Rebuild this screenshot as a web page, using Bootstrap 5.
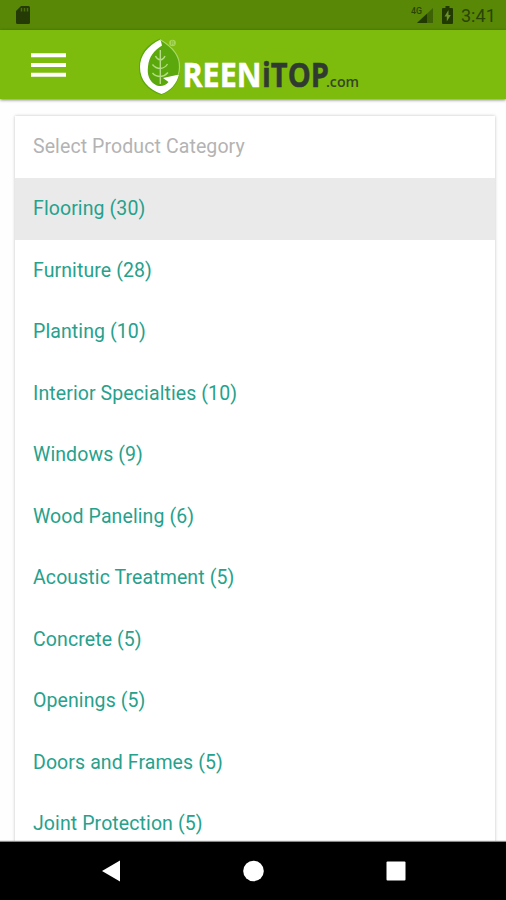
<!DOCTYPE html>
<html lang="en">
<head>
<meta charset="utf-8">
<meta name="viewport" content="width=device-width, initial-scale=1">
<title>GREENiTOP.com</title>
<link href="https://cdn.jsdelivr.net/npm/bootstrap@5.3.0/dist/css/bootstrap.min.css" rel="stylesheet">
<style>
body{font-family:Roboto,"Noto Sans",sans-serif;height:900px;background:#fefefe}
.status-bar{height:30px;background:#588806;padding:0 10px 0 16px;color:#294503}
.clock{font-size:18px;line-height:30px;letter-spacing:.1px;padding-top:2px}
.app-bar{height:69px;background:#7dbc0c;box-shadow:0 1px 3px rgba(0,0,0,.5);padding-left:31px;z-index:1}
.menu-btn{width:35px;height:26px}
.brand{margin-left:70px}
.content-area{padding:17px 11px 0 15px}
.category-card{background:#fff;box-shadow:0 0 3px rgba(0,0,0,.24)}
.category-row{height:61.5px;padding:0 18px;font-size:19.5px;letter-spacing:.1px;color:#26a18c;line-height:1;text-decoration:none}
.category-row.hint{color:#b3b3b3;height:62px}
.category-row.chosen{background:#eaeaea}
.system-nav{height:58px;background:#000;box-shadow:0 -1px 1px #888;z-index:1}
</style>
<script src="https://cdn.jsdelivr.net/npm/bootstrap@5.3.0/dist/js/bootstrap.bundle.min.js"></script>
</head>
<body class="d-flex flex-column overflow-hidden m-0">
<div class="status-bar d-flex align-items-center flex-shrink-0">
  <svg width="14" height="18" viewBox="0 0 14 18"><path d="M5 0h7.500q1.500 0 1.500 1.500V16.500q0 1.500-1.500 1.500H1.500Q0 18 0 16.500V5z" fill="#243b06"/><path d="M5.500 2v3.500M8.500 2v3.500M11.500 2v3.500" stroke="#497108" stroke-width="1.500"/></svg>
  <svg class="ms-auto" width="23" height="20" viewBox="0 0 23 20"><text x="0" y="9" font-size="9.500" font-weight="500" fill="#294503" textLength="11" lengthAdjust="spacingAndGlyphs">4G</text><path d="M22 3v15H6z" fill="#3c6205"/><path d="M16 8.700V18H6z" fill="#213a02"/></svg>
  <svg class="ms-2" width="11" height="18" viewBox="0 0 11 18"><path d="M3.500 0h4v2H10q1 0 1 1v14q0 1-1 1H1q-1 0-1-1V3q0-1 1-1h2.500z" fill="#213a02"/><path d="M6.500 4L2.500 10.500h2.300V15.500L8.800 9H6.500z" fill="#6a9427"/></svg>
  <span class="clock ms-2">3:41</span>
</div>
<header class="app-bar d-flex align-items-center flex-shrink-0 position-relative">
  <button class="menu-btn btn p-0 border-0 d-flex" aria-label="Menu"><svg width="35" height="26" viewBox="0 0 35 26"><path d="M0 3.200h35M0 13h35M0 22.800h35" stroke="#fff" stroke-width="4"/></svg></button>
  <a class="brand d-flex" href="#" aria-label="GREENiTOP.com">
    <svg width="226" height="66" viewBox="136 32 226 66" font-family="'Open Sans','Noto Sans',sans-serif" font-weight="700">
      <path d="M160 38.500C147 44 138.500 54 139 68c0 13 8 22 22 27 12-4 19-14 19-27 0-13-9-22-20-29.500z" fill="#5ba80d"/>
      <path d="M160.500 39.500C147 46 140 56 140 67c0 13 8 22 21.500 27 9-3 15-10 17.500-19.500l-16 3.500 5.500 4c-3 4-9 5.500-13.500 2.500-6-4-8-10-7-18 1-10 6-16 14-21z" fill="#fff"/>
      <path d="M160 39.500C171 46 180 55 179.500 67q0 4-1 7" fill="none" stroke="#a9d868" stroke-width="1.200"/>
      <path d="M160.300 50V84M155.500 56q1.500 3.500 5 4q3-.5 4.500-4M152.500 64.500q3 4 8 4q4.500-.5 7-4.500M152.500 73q3 3.500 8 3.500q4.500-.5 7.500-4" fill="none" stroke="#b5dc86" stroke-width="1.400"/>
      <circle cx="172.500" cy="43" r="3.300" fill="#a6d65a"/><path d="M171.500 45v-4h1.500q1.500 1 0 2h-1.500M173 43l1.200 2" fill="none" stroke="#82bd2c" stroke-width=".7"/>
      <text x="182.500" y="87.300" font-size="34.500" fill="#fff" stroke="#fff" stroke-width=".5" textLength="79" lengthAdjust="spacingAndGlyphs">REEN</text>
      <text x="262" y="87.300" font-size="34.500" fill="#303a31" stroke="#303a31" stroke-width=".5" textLength="67" lengthAdjust="spacingAndGlyphs">iTOP</text>
      <text x="326" y="87.300" font-size="15" font-weight="600" fill="#354526" textLength="33" lengthAdjust="spacingAndGlyphs">.com</text>
    </svg>
  </a>
</header>
<main class="content-area flex-grow-1 overflow-hidden">
  <div class="category-card d-flex flex-column">
    <div class="category-row hint d-flex align-items-center flex-shrink-0">Select Product Category</div>
    <a href="#" class="category-row chosen d-flex align-items-center">Flooring (30)</a>
    <a href="#" class="category-row d-flex align-items-center">Furniture (28)</a>
    <a href="#" class="category-row d-flex align-items-center">Planting (10)</a>
    <a href="#" class="category-row d-flex align-items-center">Interior Specialties (10)</a>
    <a href="#" class="category-row d-flex align-items-center">Windows (9)</a>
    <a href="#" class="category-row d-flex align-items-center">Wood Paneling (6)</a>
    <a href="#" class="category-row d-flex align-items-center">Acoustic Treatment (5)</a>
    <a href="#" class="category-row d-flex align-items-center">Concrete (5)</a>
    <a href="#" class="category-row d-flex align-items-center">Openings (5)</a>
    <a href="#" class="category-row d-flex align-items-center">Doors and Frames (5)</a>
    <a href="#" class="category-row d-flex align-items-center">Joint Protection (5)</a>
  </div>
</main>
<nav class="system-nav d-flex align-items-center justify-content-center flex-shrink-0 position-relative">
  <svg width="506" height="58" viewBox="0 842 506 58" fill="#fff"><path d="M102 871l18-10.500v21z"/><circle cx="253.500" cy="871" r="10.300"/><rect x="386.500" y="861.500" width="19" height="19" rx="1"/></svg>
</nav>
</body>
</html>
